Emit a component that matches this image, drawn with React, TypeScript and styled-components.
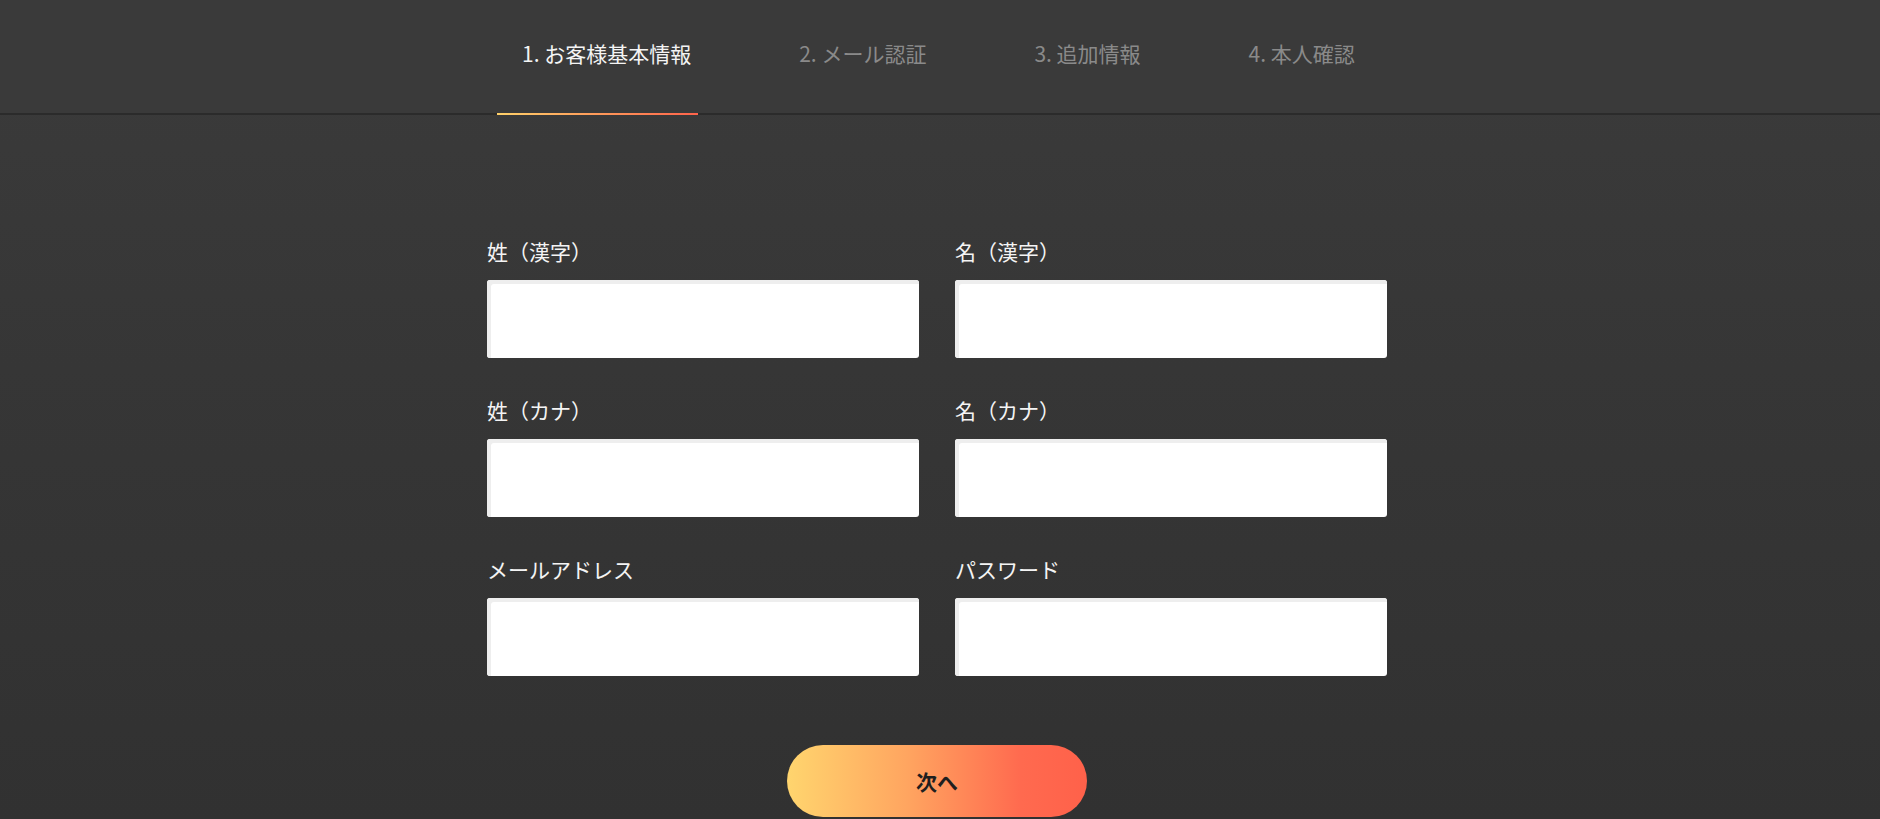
import React from "react";
import styled, { createGlobalStyle } from "styled-components";

const GlobalStyle = createGlobalStyle`
  * { box-sizing: border-box; }
  html, body { margin: 0; padding: 0; }
  body {
    min-height: 100vh;
    background: linear-gradient(180deg, #3b3b3b 0%, #363636 45%, #313131 100%);
    font-family: "Noto Sans CJK JP", "Noto Sans", sans-serif;
    color: #f2f2f2;
  }
`;

const Page = styled.div`
  min-height: 100vh;
  display: flex;
  flex-direction: column;
`;

const Header = styled.header`
  border-bottom: 2px solid #2b2b2b;
  background: #3a3a3a;
`;

const Nav = styled.nav`
  width: 900px;
  height: 113px;
  margin: 0 auto;
  padding-left: 10px;
  display: flex;
  gap: 76px;
  transform: translateX(-3px);
`;

const Tab = styled.div<{ $active?: boolean }>`
  position: relative;
  height: 100%;
  padding: 39px 7px 0 25px;
  font-size: 21px;
  line-height: 28px;
  color: ${(p) => (p.$active ? "#f4f4f4" : "#8a8a8a")};
  white-space: nowrap;

  &::after {
    content: "";
    display: ${(p) => (p.$active ? "block" : "none")};
    position: absolute;
    left: 0;
    right: 0;
    bottom: -2px;
    height: 2px;
    background: linear-gradient(90deg, #ffd16a 0%, #ff9a5a 50%, #ff634b 100%);
  }
`;

const Main = styled.main`
  width: 900px;
  margin: 0 auto;
  padding-top: 122px;
  display: flex;
  flex-direction: column;
  align-items: center;
  transform: translateX(-3px);
`;

const FieldGrid = styled.div`
  display: grid;
  grid-template-columns: 432px 432px;
  column-gap: 36px;
  row-gap: 38px;
  width: 100%;
`;

const Field = styled.label`
  display: flex;
  flex-direction: column;
  gap: 15px;
`;

const LabelText = styled.span`
  font-size: 21px;
  line-height: 28px;
  color: #f4f4f4;
`;

const Input = styled.input`
  display: block;
  width: 432px;
  height: 78px;
  border: none;
  border-radius: 3px;
  background: #ffffff;
  box-shadow: inset 4px 4px 0 #eeeeee;
  padding: 0 14px;
  font-size: 18px;
  font-family: inherit;
  outline: none;
`;

const NextButton = styled.button`
  margin-top: 69px;
  width: 300px;
  height: 72px;
  border: none;
  border-radius: 36px;
  background: linear-gradient(90deg, #ffd56e 0%, #ffa560 40%, #ff6a4f 78%, #ff614a 100%);
  color: #1f1f1f;
  font-family: inherit;
  font-size: 21px;
  font-weight: 700;
  cursor: pointer;
`;

const tabs = ["1. お客様基本情報", "2. メール認証", "3. 追加情報", "4. 本人確認"];

const fields: { label: string; type: string }[] = [
  { label: "姓（漢字）", type: "text" },
  { label: "名（漢字）", type: "text" },
  { label: "姓（カナ）", type: "text" },
  { label: "名（カナ）", type: "text" },
  { label: "メールアドレス", type: "email" },
  { label: "パスワード", type: "password" },
];

export default function App() {
  return (
    <Page>
      <GlobalStyle />
      <Header>
        <Nav>
          {tabs.map((t, i) => (
            <Tab key={t} $active={i === 0}>
              {t}
            </Tab>
          ))}
        </Nav>
      </Header>
      <Main>
        <FieldGrid>
          {fields.map((f) => (
            <Field key={f.label}>
              <LabelText>{f.label}</LabelText>
              <Input type={f.type} />
            </Field>
          ))}
        </FieldGrid>
        <NextButton type="button">次へ</NextButton>
      </Main>
    </Page>
  );
}
